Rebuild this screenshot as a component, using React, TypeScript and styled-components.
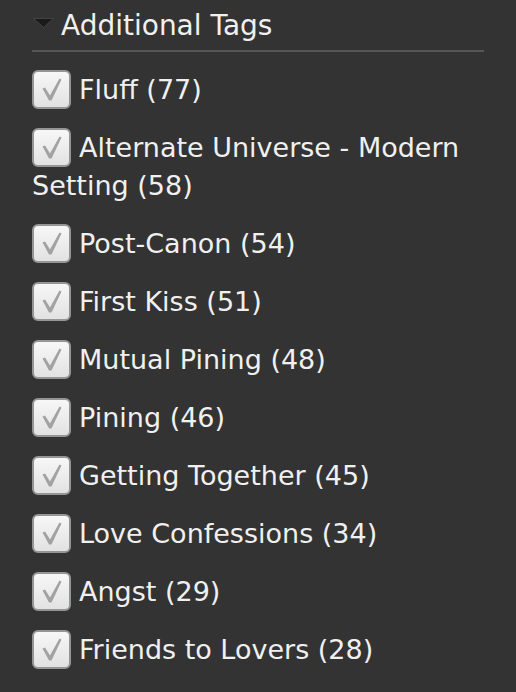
import React, { ReactElement } from "react";
import styled, { createGlobalStyle } from "styled-components";

const GlobalStyle = createGlobalStyle`
  html, body {
    margin: 0;
    padding: 0;
    background: #333333;
  }
`;

const Panel = styled.section`
  width: 452px;
  padding: 8px 0 0 32px;
  font-family: "DejaVu Sans", "Open Sans", sans-serif;
  color: #f0f0f0;
`;

const Heading = styled.h3`
  margin: 0;
  padding: 0 0 6px 0;
  display: flex;
  align-items: center;
  gap: 7px;
  font-size: 28px;
  font-weight: 400;
  line-height: 36px;
  border-bottom: 2px solid #565656;
`;

const Caret = styled.svg`
  flex: 0 0 auto;
  align-self: flex-start;
  margin: 10px 0 0 1px;
`;

const TagList = styled.ul`
  list-style: none;
  margin: 0;
  padding: 19px 0 0 0;
  display: flex;
  flex-direction: column;
  gap: 20px;
`;

const TagItem = styled.li`
  font-size: 27px;
  line-height: 38px;
`;

const Box = styled.span`
  display: inline-flex;
  align-items: center;
  justify-content: center;
  box-sizing: border-box;
  width: 39px;
  height: 39px;
  margin: -6px 8px -6px 0;
  vertical-align: middle;
  position: relative;
  top: -2px;
  border: 2px solid #959595;
  border-radius: 6px;
  background: linear-gradient(#f7f7f7, #e2e2e2);
`;

function CheckMark(): ReactElement {
  return (
    <svg width="20" height="23" viewBox="0 0 20 23">
      <path d="M0.5 10.5 L3 9.5 L8 17.5 L17.5 0.5 L19.5 1.5 L9.5 22.5 L7 22.5 Z" fill="#a2a2a2" />
    </svg>
  );
}

const tags: [string, number][] = [
  ["Fluff", 77],
  ["Alternate Universe - Modern Setting", 58],
  ["Post-Canon", 54],
  ["First Kiss", 51],
  ["Mutual Pining", 48],
  ["Pining", 46],
  ["Getting Together", 45],
  ["Love Confessions", 34],
  ["Angst", 29],
  ["Friends to Lovers", 28],
];

export default function App(): ReactElement {
  return (
    <>
      <GlobalStyle />
      <Panel>
        <Heading>
          <Caret width="21" height="10" viewBox="0 0 21 10">
            <path d="M0.5 0.5 L20.5 0.5 L10.5 9.5 Z" fill="#1a1a1a" stroke="#444444" strokeWidth="1" />
          </Caret>
          Additional Tags
        </Heading>
        <TagList>
          {tags.map(([name, count]) => (
            <TagItem key={name}>
              <Box>
                <CheckMark />
              </Box>
              {name} ({count})
            </TagItem>
          ))}
        </TagList>
      </Panel>
    </>
  );
}
